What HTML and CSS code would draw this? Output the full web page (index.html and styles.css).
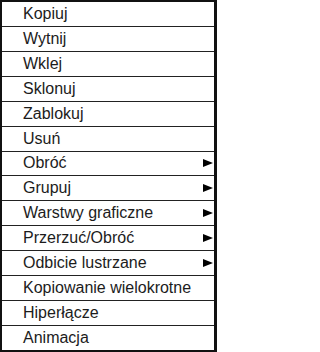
FILE: index.html
```html
<!DOCTYPE html>
<html lang="pl">
<head>
<meta charset="utf-8">
<link rel="stylesheet" href="styles.css">
</head>
<body>
<ul class="menu">
  <li class="item">Kopiuj</li>
  <li class="item">Wytnij</li>
  <li class="item">Wklej</li>
  <li class="item">Sklonuj</li>
  <li class="item">Zablokuj</li>
  <li class="item">Usuń</li>
  <li class="item sub">Obróć<span class="arrow"></span></li>
  <li class="item sub">Grupuj<span class="arrow"></span></li>
  <li class="item sub">Warstwy graficzne<span class="arrow"></span></li>
  <li class="item sub">Przerzuć/Obróć<span class="arrow"></span></li>
  <li class="item sub">Odbicie lustrzane<span class="arrow"></span></li>
  <li class="item">Kopiowanie wielokrotne</li>
  <li class="item">Hiperłącze</li>
  <li class="item">Animacja</li>
</ul>
</body>
</html>
```
FILE: styles.css
```css
html, body {
  margin: 0;
  padding: 0;
  background: #fff;
}
.menu {
  list-style: none;
  margin: 0;
  padding: 0;
  width: 217px;
  height: 352px;
  box-sizing: border-box;
  border-top: 2px solid #111;
  border-left: 2px solid #111;
  border-right: 3px solid #111;
  border-bottom: 2px solid #111;
  display: flex;
  flex-direction: column;
  font-family: "Liberation Sans", Arial, sans-serif;
  font-size: 16px;
  color: #1c1c1c;
}
.item {
  flex: 1;
  display: flex;
  align-items: center;
  justify-content: space-between;
  padding: 0 1px 0 21px;
  border-top: 1px solid #222;
}
.item:first-child {
  border-top: none;
}
.arrow {
  width: 0;
  height: 0;
  border-top: 4px solid transparent;
  border-bottom: 4px solid transparent;
  border-left: 10px solid #000;
}
```
